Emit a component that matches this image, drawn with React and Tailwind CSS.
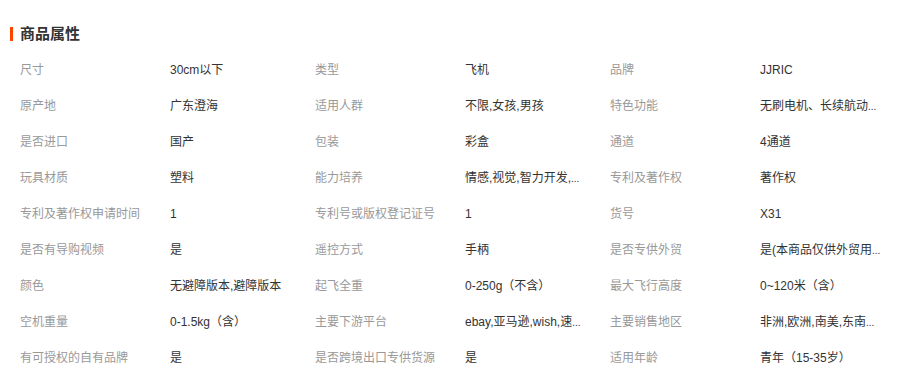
const rows = [
  [["尺寸", "30cm以下"], ["类型", "飞机"], ["品牌", "JJRIC"]],
  [["原产地", "广东澄海"], ["适用人群", "不限,女孩,男孩"], ["特色功能", "无刷电机、长续航动..."]],
  [["是否进口", "国产"], ["包装", "彩盒"], ["通道", "4通道"]],
  [["玩具材质", "塑料"], ["能力培养", "情感,视觉,智力开发,..."], ["专利及著作权", "著作权"]],
  [["专利及著作权申请时间", "1"], ["专利号或版权登记证号", "1"], ["货号", "X31"]],
  [["是否有导购视频", "是"], ["遥控方式", "手柄"], ["是否专供外贸", "是(本商品仅供外贸用..."]],
  [["颜色", "无避障版本,避障版本"], ["起飞全重", "0-250g（不含）"], ["最大飞行高度", "0~120米（含）"]],
  [["空机重量", "0-1.5kg（含）"], ["主要下游平台", "ebay,亚马逊,wish,速..."], ["主要销售地区", "非洲,欧洲,南美,东南..."]],
  [["有可授权的自有品牌", "是"], ["是否跨境出口专供货源", "是"], ["适用年龄", "青年（15-35岁）"]],
];

function Value({ text }) {
  if (text.endsWith("...")) {
    return (
      <>
        {text.slice(0, -3)}
        <span className="text-[10px]">...</span>
      </>
    );
  }
  return text;
}

export default function App() {
  return (
    <div
      className="w-[924px] h-[372px] bg-white overflow-hidden"
      style={{ fontFamily: '"Liberation Sans", "Noto Sans CJK SC", sans-serif' }}
    >
      <div className="mt-[25px] h-[18px] flex items-center pl-[10px]">
        <span className="w-[3px] h-[14px] bg-[#ff4400]" />
        <h3 className="ml-[7px] text-[15px] leading-[18px] font-bold text-[#333]">商品属性</h3>
      </div>
      <div className="mt-[9px] pl-[20px]">
        {rows.map((row, i) => (
          <div key={i} className="flex h-[36px] items-center text-[12px]">
            {row.map(([label, value], j) => (
              <div key={j} className="flex items-center">
                <span className="w-[150px] text-[#999] whitespace-nowrap">{label}</span>
                <span className="w-[145px] text-[#333] whitespace-nowrap">
                  <Value text={value} />
                </span>
              </div>
            ))}
          </div>
        ))}
      </div>
    </div>
  );
}
